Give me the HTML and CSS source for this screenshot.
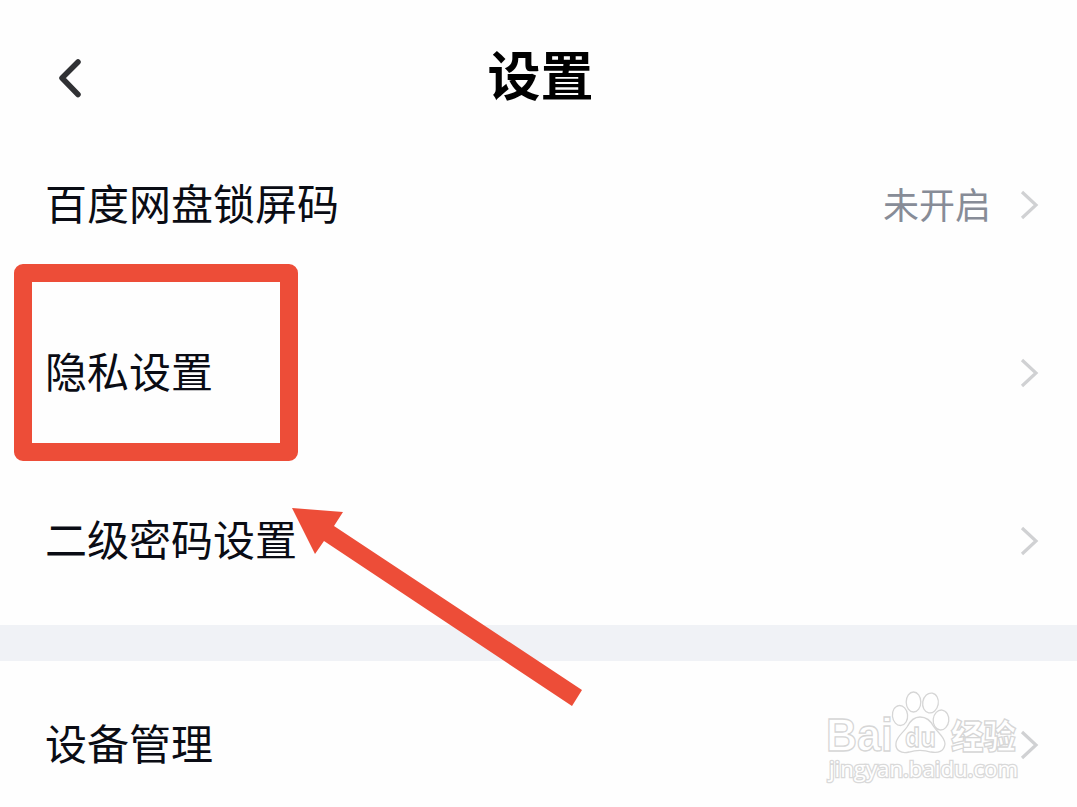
FILE: index.html
```
<!DOCTYPE html>
<html lang="zh-CN">
<head>
  <meta charset="UTF-8" />
  <title>设置</title>
  <meta name="viewport" content="width=device-width, initial-scale=1" />
  <link rel="stylesheet" href="styles.css">
</head>
<body>

  <header class="header">
    <svg class="back" width="26" height="42" viewBox="0 0 26 42"><path d="M21 5 L5 21 L21 37.500" /></svg>
    <h1>设置</h1>
  </header>

  <div class="list">
    <div class="row">
      <span class="label">百度网盘锁屏码</span>
      <span class="value">未开启</span>
      <svg class="chevron" width="20" height="32" viewBox="0 0 20 32"><path d="M3 3 L17 16 L3 29" /></svg>
    </div>
    <div class="row">
      <span class="label">隐私设置</span>
      <svg class="chevron" width="20" height="32" viewBox="0 0 20 32"><path d="M3 3 L17 16 L3 29" /></svg>
      <div class="highlight"></div>
    </div>
    <div class="row">
      <span class="label">二级密码设置</span>
      <svg class="chevron" width="20" height="32" viewBox="0 0 20 32"><path d="M3 3 L17 16 L3 29" /></svg>
    </div>
  </div>

  <div class="list">
    <div class="row">
      <span class="label">设备管理</span>
      <svg class="chevron" width="20" height="32" viewBox="0 0 20 32"><path d="M3 3 L17 16 L3 29" /></svg>
    </div>
  </div>

  <svg class="arrow" width="290" height="200" viewBox="0 0 290 200">
    <polygon points="0,0 51,4 42,18 290,182 280,198 32,33 23,46" />
  </svg>

  <svg class="watermark" width="210" height="100" viewBox="0 0 210 100">
    <g class="logo">
      <ellipse cx="79" cy="27.500" rx="7.600" ry="10" transform="rotate(-6 79 27.500)" />
      <ellipse cx="92.500" cy="14" rx="7.300" ry="10" />
      <ellipse cx="109.500" cy="15" rx="7.800" ry="10" transform="rotate(10 109.500 15)" />
      <ellipse cx="120" cy="32" rx="7.800" ry="10" transform="rotate(6 120 32)" />
      <path d="M99 29 C106 29 110 33 113 39 C117 45 124 49 124 56 C123 64 117 65 110 64 C103 62 95 62 88 64 C80 66 74 62 75 55 C76 48 82 45 86 39 C89 33 93 29 99 29 Z" />
      <text class="du" x="84" y="59" textLength="31" lengthAdjust="spacingAndGlyphs">du</text>
      <text class="bai" x="5" y="63" textLength="67" lengthAdjust="spacingAndGlyphs">Bai</text>
      <text class="cjk" x="130" y="61" textLength="65" lengthAdjust="spacingAndGlyphs">经验</text>
    </g>
    <text class="site" x="8" y="89" textLength="189" lengthAdjust="spacingAndGlyphs">jingyan.baidu.com</text>
  </svg>

</body>
</html>
```
FILE: styles.css
```
body {
  margin: 0;
  position: relative;
  height: 807px;
  overflow: hidden;
  font-family: "Noto Sans CJK SC", sans-serif;
  background: #fefefe;
  color: #0a0c14;
}
.header {
  display: flex;
  align-items: center;
  justify-content: center;
  height: 121px;
}
.header h1 {
  margin: 24px 0 0 4px;
  font-size: 53px;
  line-height: 60px;
  font-weight: 700;
  color: #000;
}
.back {
  position: absolute;
  left: 57px;
  top: 57px;
  fill: none;
  stroke: #303134;
  stroke-width: 5.500;
  stroke-linecap: round;
  stroke-linejoin: round;
}
.row {
  position: relative;
  display: flex;
  align-items: center;
  height: 168px;
  padding: 0 38px 0 45px;
}
.list + .list {
  border-top: 36px solid #f0f2f6;
}
.label {
  flex: 1;
  padding-bottom: 6px;
  font-size: 42px;
  line-height: 60px;
}
.value {
  margin-right: 28px;
  padding-bottom: 4px;
  font-size: 36px;
  line-height: 50px;
  color: #878c97;
}
.chevron {
  fill: none;
  stroke: #d0d1d3;
  stroke-width: 3.200;
}
.highlight {
  position: absolute;
  left: 14px;
  top: -25px;
  width: 248px;
  height: 161px;
  border: 18px solid #ed4d38;
  border-radius: 9px;
}
.arrow {
  position: absolute;
  left: 292px;
  top: 508px;
  fill: #ed4d38;
}
.watermark {
  position: absolute;
  left: 821px;
  top: 688px;
}
.logo {
  fill: #fff;
  stroke: #d6d6d6;
  stroke-width: 1.300;
}
.bai {
  font: bold 46px "Liberation Sans", sans-serif;
}
.du {
  font: bold 27px "Open Sans", sans-serif;
}
.cjk {
  font: 900 34px "Noto Sans CJK SC", sans-serif;
}
.site {
  font: 22px "Open Sans", sans-serif;
  fill: #fff;
  stroke: #d9d9d9;
  stroke-width: 2.600;
  paint-order: stroke;
}
```
